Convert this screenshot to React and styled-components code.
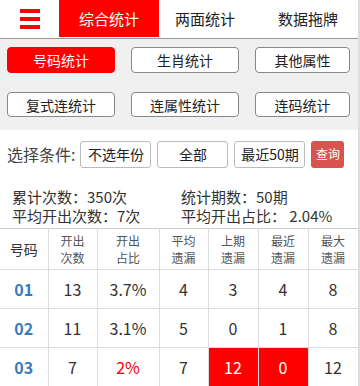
import React from 'react'
import styled, { createGlobalStyle } from 'styled-components'

const GlobalStyle = createGlobalStyle`
  html, body {
    margin: 0;
    padding: 0;
    background: #fff;
  }
  body {
    font-family: "Noto Sans CJK SC", "Liberation Sans", sans-serif;
    color: #333;
  }
`

const Page = styled.div`
  width: 360px;
  height: 386px;
  overflow: hidden;
  border-right: 2px solid #ddd;
  box-sizing: border-box;
`

const NavBar = styled.div`
  display: flex;
  height: 38px;
  border-bottom: 1px solid #999;
  background: #fff;
  overflow: hidden;
`

const MenuButton = styled.div`
  width: 59px;
  flex-shrink: 0;
  display: flex;
  align-items: center;
  justify-content: center;
`

const Tab = styled.div`
  width: ${p => p.$w}px;
  flex-shrink: 0;
  display: flex;
  align-items: center;
  justify-content: center;
  font-size: 15px;
  line-height: 20px;
  background: ${p => (p.$active ? '#fe0000' : 'transparent')};
  color: ${p => (p.$active ? '#fff' : '#222')};
  margin-bottom: ${p => (p.$active ? '1px' : '0')};
`

const GrayPanel = styled.div`
  background: #f0f0f0;
  padding: 8px 8px 13px 7px;
  display: grid;
  grid-template-columns: 108px 108px 95px;
  column-gap: 16px;
  row-gap: 19px;
`

const NavButton = styled.div`
  height: ${p => p.$h}px;
  box-sizing: border-box;
  border: 1px solid ${p => (p.$active ? '#fe0000' : '#888')};
  border-radius: 4px;
  background: ${p => (p.$active ? '#fe0000' : '#fff')};
  color: ${p => (p.$active ? '#fff' : '#222')};
  font-size: 14px;
  line-height: 18px;
  display: flex;
  align-items: center;
  justify-content: center;
`

const FilterRow = styled.div`
  display: flex;
  align-items: center;
  padding: 10px 0 0 7px;
  height: 28px;
`

const FilterLabel = styled.span`
  font-size: 16px;
  line-height: 20px;
  color: #444;
  margin-right: 5px;
`

const FilterButton = styled.div`
  width: ${p => p.$w}px;
  height: 27px;
  box-sizing: border-box;
  border: 1px solid #bbb;
  border-radius: 3px;
  background: #fff;
  font-size: 14px;
  line-height: 18px;
  color: #222;
  display: flex;
  align-items: center;
  justify-content: center;
  margin-right: 6px;
`

const QueryButton = styled.div`
  width: 33px;
  height: 27px;
  border-radius: 3px;
  background: #d9534f;
  color: #fff;
  font-size: 12px;
  line-height: 16px;
  display: flex;
  align-items: center;
  justify-content: center;
`

const Stats = styled.div`
  display: grid;
  grid-template-columns: 169px 1fr;
  grid-auto-rows: 19px;
  padding: 19px 0 0 12px;
  font-size: 15px;
  line-height: 19px;
  color: #333;
  height: 41px;
`

const Table = styled.table`
  border-collapse: collapse;
  table-layout: fixed;
  width: 358px;
`

const HeadCell = styled.th`
  border: 1px solid #ddd;
  border-top: 1px solid #ccc;
  font-weight: normal;
  font-size: 12px;
  line-height: 17px;
  color: #555;
  height: 40px;
  padding: 0;
  text-align: center;
  &:first-child {
    border-left: none;
    font-size: 14px;
    color: #333;
  }
`

const Cell = styled.td`
  border: 1px solid #ddd;
  height: 38px;
  padding: 0;
  text-align: center;
  font-size: 16px;
  line-height: 20px;
  background: ${p => (p.$hot ? '#fe0000' : 'transparent')};
  color: ${p => (p.$hot ? '#fff' : p.$red ? '#e00' : '#333')};
  &:first-child {
    border-left: none;
  }
`

const NumCell = styled(Cell)`
  color: #3a7ab8;
  font-weight: bold;
`

const Hamburger = () => (
  <svg width="20" height="20" viewBox="0 0 20 20">
    <rect x="0" y="0" width="20" height="4" fill="#fe0000" />
    <rect x="0" y="8" width="20" height="4" fill="#fe0000" />
    <rect x="0" y="16" width="20" height="4" fill="#fe0000" />
  </svg>
)

const heads = [
  ['号码'],
  ['开出', '次数'],
  ['开出', '占比'],
  ['平均', '遗漏'],
  ['上期', '遗漏'],
  ['最近', '遗漏'],
  ['最大', '遗漏'],
]

const rows = [
  { num: '01', vals: ['13', '3.7%', '4', '3', '4', '8'] },
  { num: '02', vals: ['11', '3.1%', '5', '0', '1', '8'] },
  { num: '03', vals: ['7', '2%', '7', '12', '0', '12'], red: [1], hot: [3, 4] },
]

const colWidths = [48, 49, 62, 49, 50, 50, 50]

export default function App() {
  return (
    <Page>
      <GlobalStyle />
      <NavBar>
        <MenuButton><Hamburger /></MenuButton>
        <Tab $w={100} $active>综合统计</Tab>
        <Tab $w={92}>两面统计</Tab>
        <Tab $w={114}>数据拖牌</Tab>
      </NavBar>
      <GrayPanel>
        <NavButton $h={26} $active>号码统计</NavButton>
        <NavButton $h={26}>生肖统计</NavButton>
        <NavButton $h={26}>其他属性</NavButton>
        <NavButton $h={25}>复式连统计</NavButton>
        <NavButton $h={25}>连属性统计</NavButton>
        <NavButton $h={25}>连码统计</NavButton>
      </GrayPanel>
      <FilterRow>
        <FilterLabel>选择条件:</FilterLabel>
        <FilterButton $w={71}>不选年份</FilterButton>
        <FilterButton $w={71}>全部</FilterButton>
        <FilterButton $w={71}>最近50期</FilterButton>
        <QueryButton>查询</QueryButton>
      </FilterRow>
      <Stats>
        <span>累计次数：350次</span>
        <span>统计期数：50期</span>
        <span>平均开出次数：7次</span>
        <span>平均开出占比： 2.04%</span>
      </Stats>
      <Table>
        <colgroup>
          {colWidths.map((w, i) => <col key={i} style={{ width: w }} />)}
        </colgroup>
        <thead>
          <tr>
            {heads.map((h, i) => (
              <HeadCell key={i}>{h.map((t, j) => <div key={j}>{t}</div>)}</HeadCell>
            ))}
          </tr>
        </thead>
        <tbody>
          {rows.map(r => (
            <tr key={r.num}>
              <NumCell>{r.num}</NumCell>
              {r.vals.map((v, i) => (
                <Cell key={i} $red={r.red && r.red.includes(i)} $hot={r.hot && r.hot.includes(i)}>{v}</Cell>
              ))}
            </tr>
          ))}
        </tbody>
      </Table>
    </Page>
  )
}
